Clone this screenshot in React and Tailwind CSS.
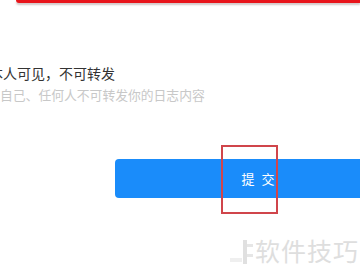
import React from 'react';

const cjk = { fontFamily: '"Noto Sans CJK SC", "Noto Sans", sans-serif' };

export default function App() {
  return (
    <div className="relative w-[360px] h-[280px] overflow-hidden bg-white" style={cjk}>
      {/* top highlight frame edge */}
      <div className="ml-[16px] h-[3px] bg-[#e8141a] rounded-bl-[3px] shadow-[0_2px_2px_rgba(120,90,90,0.35)]" />

      {/* option text */}
      <div className="mt-[60px] flex flex-col gap-[3px] whitespace-nowrap">
        <div className="-ml-[11px] text-[14px] leading-[20px] text-[#333]">本人可见，不可转发</div>
        <div className="text-[12.8px] leading-[18px] text-[#c8c8c8]">自己、任何人不可转发你的日志内容</div>
      </div>

      {/* submit */}
      <div className="mt-[55px] ml-[115px] w-[286px] h-[39px] rounded-[4px] bg-[#1a8cfa] flex items-center justify-center text-white text-[13px] tracking-[7px]">
        <span className="pl-[7px]">提交</span>
      </div>

      {/* annotation box */}
      <div className="absolute left-[221px] top-[145px] w-[57px] h-[69px] border-2 border-[#d0454b]" />

      {/* watermark */}
      <div className="absolute left-[230px] top-[235px] flex items-end text-[#dedede]">
        <div className="w-[12px] h-[4px] mb-[3px] bg-[#efefef]" />
        <svg width="13" height="28" viewBox="0 0 13 28">
          <rect x="1" y="3" width="4" height="24" fill="#e0e0e0" />
          <rect x="5" y="7" width="6" height="3" fill="#e6e6e6" />
          <rect x="5" y="17" width="6" height="3" fill="#e6e6e6" />
        </svg>
        <span className="text-[25px] leading-[30px] tracking-[1px]">软件技巧</span>
      </div>
    </div>
  );
}
